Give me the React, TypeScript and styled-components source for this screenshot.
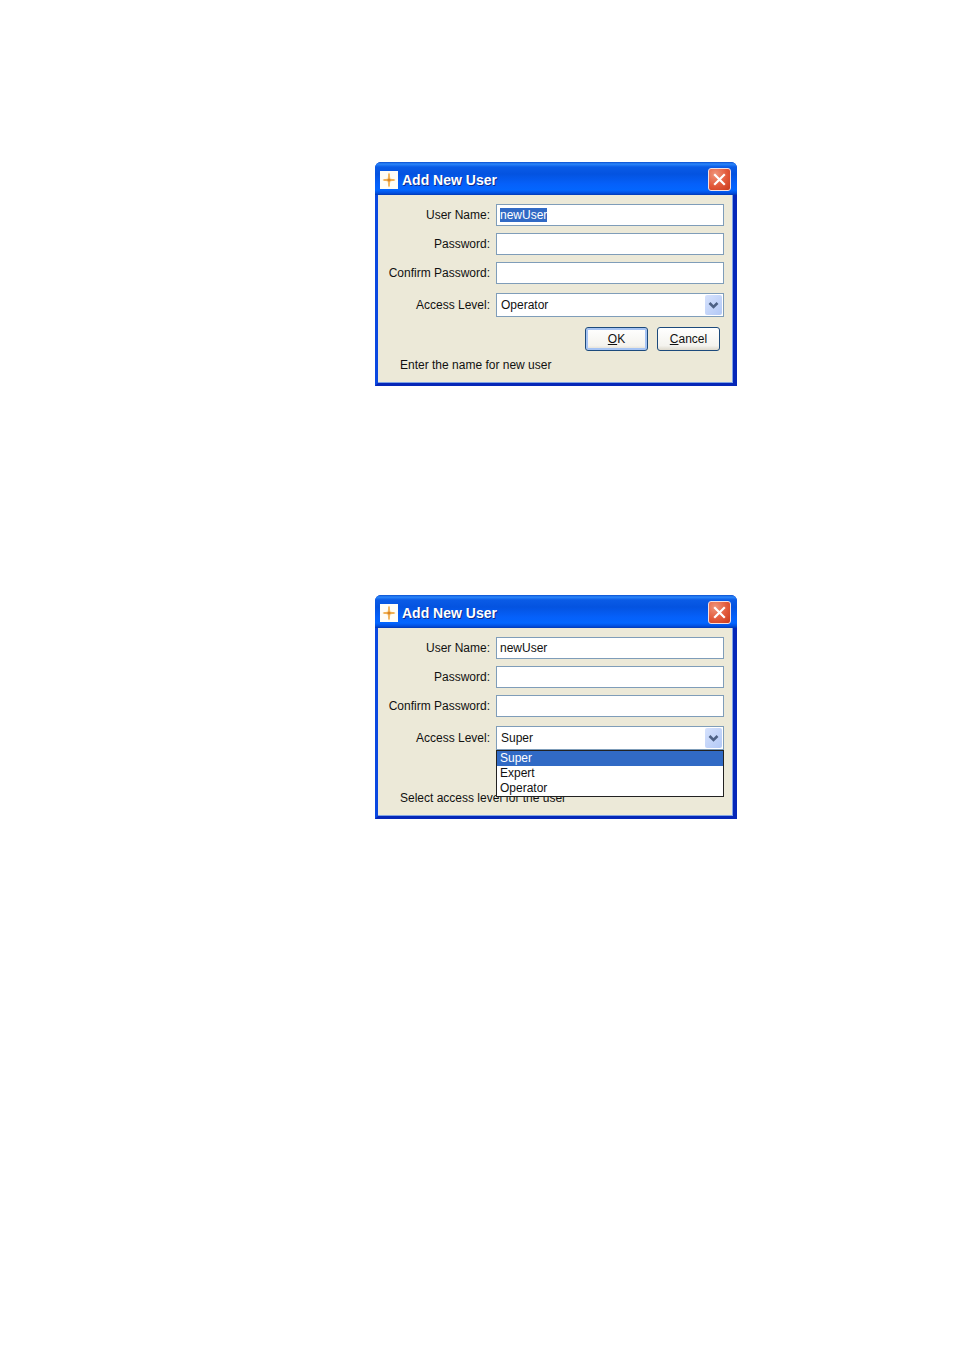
import React, { useEffect, useId, useRef } from "react";
import styled, { createGlobalStyle, css } from "styled-components";

const GlobalStyle = createGlobalStyle`
  * { box-sizing: border-box; }
  body {
    margin: 0;
    background: #fff;
    color: #111;
    font: 12px/16px "Liberation Sans", Arial, sans-serif;
  }
`;

const Page = styled.main`
  display: flex;
  flex-direction: column;
  align-items: center;
  gap: 209px;
  padding: 162px 0 162px 158px;
`;

const Window = styled.section`
  width: 100%;
  max-width: 362px;
  border-radius: 6px 6px 0 0;
  background: #0a3bd0;
`;

const TitleBar = styled.header`
  display: flex;
  align-items: center;
  height: 33px;
  gap: 4px;
  padding: 2px 6px 0 5px;
  border-radius: 6px 6px 0 0;
  background: linear-gradient(
    #0a4fd0 0,
    #2b86fa 2px,
    #0a5be6 5px,
    #0453e0 12px,
    #0560fa 22px,
    #0366ff 28px,
    #0250e0 31px,
    #0138b4 33px
  );
`;

const Title = styled.h1`
  flex: 1;
  margin: 0;
  color: #fff;
  font-size: 14px;
  line-height: 18px;
  text-shadow: 1px 1px 0 #0b2a8c;
`;

const CloseButton = styled.button`
  display: grid;
  place-items: center;
  width: 23px;
  height: 23px;
  padding: 0;
  border: 1px solid #f5dfe0;
  border-radius: 3px;
  background: radial-gradient(circle at 30% 25%, #f0957a, #e2593a 55%, #c8391c);
`;

const Body = styled.form`
  display: flex;
  flex-direction: column;
  margin: 0;
  min-height: 191px;
  padding: 9px 9px 10px 10px;
  border: solid #0527b8;
  border-width: 0 4px 3px 3px;
  border-left-color: #0a48e0;
  background: #ece9d8;
  box-shadow: inset -1px -1px 0 #7fa3e6;
`;

const Fields = styled.div`
  display: flex;
  flex-direction: column;
  gap: 7px;
`;

const FieldRow = styled.div<{ $spaced?: boolean }>`
  display: grid;
  grid-template-columns: 102px minmax(0, 1fr);
  column-gap: 6px;
  align-items: center;
  margin-top: ${(p) => (p.$spaced ? 2 : 0)}px;
`;

const Label = styled.label`
  text-align: right;
  white-space: nowrap;
`;

const controlStyle = css`
  width: 100%;
  margin: 0;
  border: 1px solid #7f9db9;
  border-radius: 0;
  outline: none;
  background: #fff;
  color: #111;
  font: inherit;
`;

const TextInput = styled.input`
  ${controlStyle}
  height: 22px;
  padding: 0 3px;
  &::selection {
    background: #316ac5;
    color: #fff;
  }
`;

const SelectBox = styled.div`
  position: relative;
`;

const Select = styled.select`
  ${controlStyle}
  display: block;
  appearance: none;
  height: 24px;
  padding: 0 22px 0 4px;
`;

const DropArrow = styled.svg`
  position: absolute;
  top: 2px;
  right: 2px;
  pointer-events: none;
`;

const OptionList = styled.ul`
  position: absolute;
  z-index: 1;
  top: 100%;
  left: 0;
  right: 0;
  margin: 0;
  padding: 0;
  border: 1px solid #222;
  background: #fff;
  list-style: none;
`;

const OptionItem = styled.li<{ $active: boolean }>`
  padding-left: 3px;
  line-height: 15px;
  background: ${(p) => (p.$active ? "#316ac5" : "#fff")};
  color: ${(p) => (p.$active ? "#fff" : "#111")};
`;

const Actions = styled.div`
  display: flex;
  justify-content: flex-end;
  gap: 9px;
  min-height: 24px;
  margin: 10px 4px 0 0;
`;

const PushButton = styled.button<{ $primary?: boolean }>`
  width: 63px;
  height: 24px;
  padding: 0;
  border: 1px solid #1c4a7c;
  border-radius: 3px;
  background: linear-gradient(#fff, #f4f3ee 80%, #dcd8cc);
  box-shadow: ${(p) => (p.$primary ? "inset 0 0 0 2px #a5c3f3" : "none")};
  color: #111;
  font: inherit;
`;

const Status = styled.p`
  margin: 6px 0 0 12px;
`;

function StarIcon() {
  return (
    <svg width="18" height="18" viewBox="0 0 18 18" aria-hidden="true">
      <rect width="18" height="18" fill="#fffdf6" />
      <path d="M9 1 L10.500 7.500 L16 9 L10.500 10.500 L9 17 L7.500 10.500 L2 9 L7.500 7.500 Z" fill="#fad596" />
      <path d="M9 2.500V15.500M3.500 9H14.500" stroke="#eda43c" strokeWidth="1.300" />
      <circle cx="9" cy="9" r="1.600" fill="#d98420" />
    </svg>
  );
}

interface DialogProps {
  accessLevel: string;
  status: string;
  selectName?: boolean;
  listOpen?: boolean;
}

const LEVELS = ["Super", "Expert", "Operator"];

function AddUserDialog({ accessLevel, status, selectName, listOpen }: DialogProps) {
  const id = useId();
  const nameRef = useRef<HTMLInputElement>(null);

  useEffect(() => {
    if (selectName) {
      nameRef.current?.focus();
      nameRef.current?.select();
    }
  }, [selectName]);

  return (
    <Window role="dialog" aria-labelledby={`${id}-title`}>
      <TitleBar>
        <StarIcon />
        <Title id={`${id}-title`}>Add New User</Title>
        <CloseButton type="button" aria-label="Close">
          <svg width="15" height="15" viewBox="0 0 15 15" aria-hidden="true">
            <path d="M3 3L12 12M12 3L3 12" stroke="#fff" strokeWidth="2.200" strokeLinecap="square" />
          </svg>
        </CloseButton>
      </TitleBar>
      <Body onSubmit={(e) => e.preventDefault()}>
        <Fields>
          <FieldRow>
            <Label htmlFor={`${id}-name`}>User Name:</Label>
            <TextInput ref={nameRef} id={`${id}-name`} type="text" defaultValue="newUser" spellCheck={false} />
          </FieldRow>
          <FieldRow>
            <Label htmlFor={`${id}-password`}>Password:</Label>
            <TextInput id={`${id}-password`} type="password" />
          </FieldRow>
          <FieldRow>
            <Label htmlFor={`${id}-confirm`}>Confirm Password:</Label>
            <TextInput id={`${id}-confirm`} type="password" />
          </FieldRow>
          <FieldRow $spaced>
            <Label htmlFor={`${id}-level`}>Access Level:</Label>
            <SelectBox>
              <Select id={`${id}-level`} defaultValue={accessLevel}>
                {LEVELS.map((level) => (
                  <option key={level}>{level}</option>
                ))}
              </Select>
              <DropArrow width="17" height="20" viewBox="0 0 17 20" aria-hidden="true">
                <defs>
                  <linearGradient id={`${id}-arrow`} x1="0" y1="0" x2="1" y2="1">
                    <stop offset="0" stopColor="#d6e2fd" />
                    <stop offset="1" stopColor="#b2c8f5" />
                  </linearGradient>
                </defs>
                <rect width="17" height="20" rx="2" fill={`url(#${id}-arrow)`} />
                <path d="M4.500 8L8.500 12L12.500 8" fill="none" stroke="#4d6185" strokeWidth="2.600" />
              </DropArrow>
              {listOpen && (
                <OptionList role="listbox" aria-label="Access Level">
                  {LEVELS.map((level) => (
                    <OptionItem
                      key={level}
                      role="option"
                      aria-selected={level === accessLevel}
                      $active={level === accessLevel}
                    >
                      {level}
                    </OptionItem>
                  ))}
                </OptionList>
              )}
            </SelectBox>
          </FieldRow>
        </Fields>
        <Actions>
          {!listOpen && (
            <>
              <PushButton type="submit" $primary>
                <u>O</u>K
              </PushButton>
              <PushButton type="button">
                <u>C</u>ancel
              </PushButton>
            </>
          )}
        </Actions>
        <Status>{status}</Status>
      </Body>
    </Window>
  );
}

export default function App() {
  return (
    <>
      <GlobalStyle />
      <Page>
        <AddUserDialog accessLevel="Operator" status="Enter the name for new user" selectName />
        <AddUserDialog accessLevel="Super" status="Select access level for the user" listOpen />
      </Page>
    </>
  );
}
